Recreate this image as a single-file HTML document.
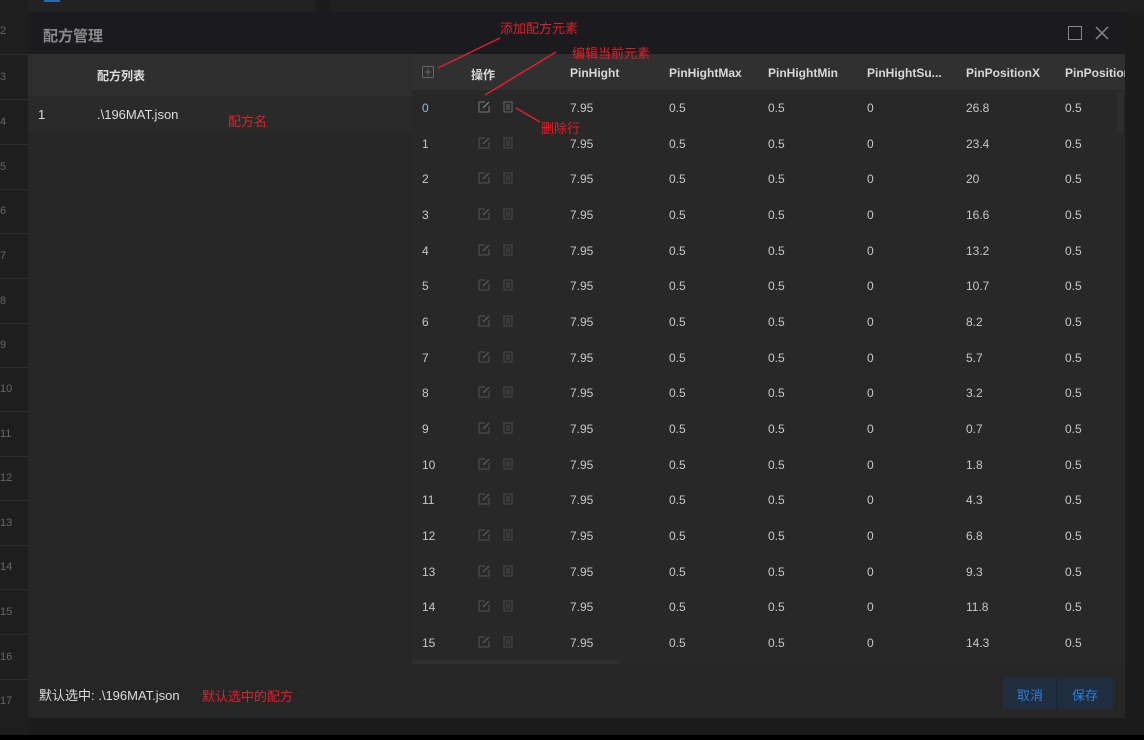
<!DOCTYPE html>
<html><head><meta charset="utf-8"><style>
*{margin:0;padding:0;box-sizing:border-box}
body{width:1144px;height:740px;background:#1c1c1c;position:relative;overflow:hidden;font-family:"Liberation Sans","Noto Sans CJK SC",sans-serif;color:#ccc;font-size:12px}
.a{position:absolute}
.ln{position:absolute;left:0;width:28px;height:1px;background:#2c2c2c}
.rn{position:absolute;left:0;font-size:11px;color:#666}
.dlg{left:28px;top:12px;width:1097px;height:706px;background:#262626}
.row{position:absolute;left:412px;width:713px;height:36px;overflow:hidden}
.row span{position:absolute;top:11px;font-size:12px;color:#c8c8c8;white-space:nowrap}
.hd span{position:absolute;top:12px;font-weight:bold;color:#d8d8d8;font-size:12px}
.red{color:#e0202a;position:absolute;font-size:13px}
</style></head><body>
<div class="a" style="left:0;top:0;width:315px;height:12px;background:#222"></div>
<div class="a" style="left:44px;top:0;width:16px;height:2px;background:#2b6aa8"></div>
<div class="a" style="left:330px;top:0;width:814px;height:12px;background:#202020"></div>
<div class="a" style="left:0;top:0;width:28px;height:740px;background:#1e1e1e"></div>
<span class="rn" style="top:25px">2</span><div class="ln" style="top:54px"></div>
<span class="rn" style="top:71px">3</span><div class="ln" style="top:99px"></div>
<span class="rn" style="top:116px">4</span><div class="ln" style="top:144px"></div>
<span class="rn" style="top:161px">5</span><div class="ln" style="top:189px"></div>
<span class="rn" style="top:205px">6</span><div class="ln" style="top:233px"></div>
<span class="rn" style="top:250px">7</span><div class="ln" style="top:278px"></div>
<span class="rn" style="top:295px">8</span><div class="ln" style="top:323px"></div>
<span class="rn" style="top:339px">9</span><div class="ln" style="top:367px"></div>
<span class="rn" style="top:383px">10</span><div class="ln" style="top:411px"></div>
<span class="rn" style="top:428px">11</span><div class="ln" style="top:456px"></div>
<span class="rn" style="top:472px">12</span><div class="ln" style="top:500px"></div>
<span class="rn" style="top:517px">13</span><div class="ln" style="top:545px"></div>
<span class="rn" style="top:561px">14</span><div class="ln" style="top:589px"></div>
<span class="rn" style="top:606px">15</span><div class="ln" style="top:634px"></div>
<span class="rn" style="top:651px">16</span><div class="ln" style="top:679px"></div>
<span class="rn" style="top:695px">17</span>
<div class="a" style="left:0;top:735px;width:1144px;height:5px;background:#000"></div>

<div class="a dlg"></div>
<div class="a" style="left:28px;top:12px;width:1097px;height:42px;background:#1b1b1f"></div>
<span class="a" style="left:43px;top:25px;font-size:15px;color:#8a8a8a;font-weight:bold">配方管理</span>
<div class="a" style="left:1068px;top:26px;width:14px;height:14px;border:1.5px solid #888"></div>
<svg class="a" style="left:1095px;top:26px" width="14" height="14"><path d="M1 1L13 13M13 1L1 13" stroke="#888" stroke-width="1.5"/></svg>

<div class="a" style="left:28px;top:54px;width:384px;height:42px;background:#2e2e2e"></div>
<span class="a" style="left:97px;top:67px;font-weight:bold;color:#ddd;font-size:12px">配方列表</span>
<div class="a" style="left:28px;top:96px;width:384px;height:37px;background:#2a2a2a"></div>
<span class="a" style="left:38px;top:107px;color:#ddd;font-size:13px">1</span>
<span class="a" style="left:97px;top:107px;color:#ddd;font-size:13px">.\196MAT.json</span>

<div class="a" style="left:412px;top:54px;width:713px;height:611px;background:#282828"></div>
<div class="row hd" style="top:54px;background:#303030">
<svg class="a" style="left:10px;top:12px" width="12" height="12"><rect x="0.5" y="0.5" width="11" height="11" fill="none" stroke="#666"/><path d="M3 6H9M6 3V9" stroke="#666"/></svg>
<span style="left:59px">操作</span><span style="left:158px">PinHight</span><span style="left:257px">PinHightMax</span><span style="left:356px">PinHightMin</span><span style="left:455px">PinHightSu...</span><span style="left:554px">PinPositionX</span><span style="left:653px">PinPositionY</span>
</div>
<div class="a" style="left:1117px;top:92px;width:6px;height:40px;background:#2e2e2e"></div>
<div class="a" style="left:412px;top:660px;width:208px;height:4px;background:#2f2f2f"></div>

<div class="row" style="top:90px"><span style="left:10px;color:#8fb8e8">0</span><svg class="a" style="left:66px;top:11px" width="12" height="12"><path d="M1 1H7M1 1V11H11V5" fill="none" stroke="#777"/><path d="M5 7L11 1" stroke="#777" stroke-width="1.5"/></svg><svg class="a" style="left:91px;top:10px" width="10" height="13"><rect x="1" y="2" width="8" height="10" fill="none" stroke="#666"/><path d="M0 2H10M4 4V10M6 4V10" stroke="#666"/></svg><span style="left:158px">7.95</span><span style="left:257px">0.5</span><span style="left:356px">0.5</span><span style="left:455px">0</span><span style="left:554px">26.8</span><span style="left:653px">0.5</span></div>
<div class="row" style="top:125.7px"><span style="left:10px">1</span><svg class="a" style="left:66px;top:11px" width="12" height="12"><path d="M1 1H7M1 1V11H11V5" fill="none" stroke="#555"/><path d="M5 7L11 1" stroke="#555" stroke-width="1.5"/></svg><svg class="a" style="left:91px;top:10px" width="10" height="13"><rect x="1" y="2" width="8" height="10" fill="none" stroke="#4a4a4a"/><path d="M0 2H10M4 4V10M6 4V10" stroke="#4a4a4a"/></svg><span style="left:158px">7.95</span><span style="left:257px">0.5</span><span style="left:356px">0.5</span><span style="left:455px">0</span><span style="left:554px">23.4</span><span style="left:653px">0.5</span></div>
<div class="row" style="top:161.3px"><span style="left:10px">2</span><svg class="a" style="left:66px;top:11px" width="12" height="12"><path d="M1 1H7M1 1V11H11V5" fill="none" stroke="#555"/><path d="M5 7L11 1" stroke="#555" stroke-width="1.5"/></svg><svg class="a" style="left:91px;top:10px" width="10" height="13"><rect x="1" y="2" width="8" height="10" fill="none" stroke="#4a4a4a"/><path d="M0 2H10M4 4V10M6 4V10" stroke="#4a4a4a"/></svg><span style="left:158px">7.95</span><span style="left:257px">0.5</span><span style="left:356px">0.5</span><span style="left:455px">0</span><span style="left:554px">20</span><span style="left:653px">0.5</span></div>
<div class="row" style="top:197px"><span style="left:10px">3</span><svg class="a" style="left:66px;top:11px" width="12" height="12"><path d="M1 1H7M1 1V11H11V5" fill="none" stroke="#555"/><path d="M5 7L11 1" stroke="#555" stroke-width="1.5"/></svg><svg class="a" style="left:91px;top:10px" width="10" height="13"><rect x="1" y="2" width="8" height="10" fill="none" stroke="#4a4a4a"/><path d="M0 2H10M4 4V10M6 4V10" stroke="#4a4a4a"/></svg><span style="left:158px">7.95</span><span style="left:257px">0.5</span><span style="left:356px">0.5</span><span style="left:455px">0</span><span style="left:554px">16.6</span><span style="left:653px">0.5</span></div>
<div class="row" style="top:232.7px"><span style="left:10px">4</span><svg class="a" style="left:66px;top:11px" width="12" height="12"><path d="M1 1H7M1 1V11H11V5" fill="none" stroke="#555"/><path d="M5 7L11 1" stroke="#555" stroke-width="1.5"/></svg><svg class="a" style="left:91px;top:10px" width="10" height="13"><rect x="1" y="2" width="8" height="10" fill="none" stroke="#4a4a4a"/><path d="M0 2H10M4 4V10M6 4V10" stroke="#4a4a4a"/></svg><span style="left:158px">7.95</span><span style="left:257px">0.5</span><span style="left:356px">0.5</span><span style="left:455px">0</span><span style="left:554px">13.2</span><span style="left:653px">0.5</span></div>
<div class="row" style="top:268.3px"><span style="left:10px">5</span><svg class="a" style="left:66px;top:11px" width="12" height="12"><path d="M1 1H7M1 1V11H11V5" fill="none" stroke="#555"/><path d="M5 7L11 1" stroke="#555" stroke-width="1.5"/></svg><svg class="a" style="left:91px;top:10px" width="10" height="13"><rect x="1" y="2" width="8" height="10" fill="none" stroke="#4a4a4a"/><path d="M0 2H10M4 4V10M6 4V10" stroke="#4a4a4a"/></svg><span style="left:158px">7.95</span><span style="left:257px">0.5</span><span style="left:356px">0.5</span><span style="left:455px">0</span><span style="left:554px">10.7</span><span style="left:653px">0.5</span></div>
<div class="row" style="top:304px"><span style="left:10px">6</span><svg class="a" style="left:66px;top:11px" width="12" height="12"><path d="M1 1H7M1 1V11H11V5" fill="none" stroke="#555"/><path d="M5 7L11 1" stroke="#555" stroke-width="1.5"/></svg><svg class="a" style="left:91px;top:10px" width="10" height="13"><rect x="1" y="2" width="8" height="10" fill="none" stroke="#4a4a4a"/><path d="M0 2H10M4 4V10M6 4V10" stroke="#4a4a4a"/></svg><span style="left:158px">7.95</span><span style="left:257px">0.5</span><span style="left:356px">0.5</span><span style="left:455px">0</span><span style="left:554px">8.2</span><span style="left:653px">0.5</span></div>
<div class="row" style="top:339.7px"><span style="left:10px">7</span><svg class="a" style="left:66px;top:11px" width="12" height="12"><path d="M1 1H7M1 1V11H11V5" fill="none" stroke="#555"/><path d="M5 7L11 1" stroke="#555" stroke-width="1.5"/></svg><svg class="a" style="left:91px;top:10px" width="10" height="13"><rect x="1" y="2" width="8" height="10" fill="none" stroke="#4a4a4a"/><path d="M0 2H10M4 4V10M6 4V10" stroke="#4a4a4a"/></svg><span style="left:158px">7.95</span><span style="left:257px">0.5</span><span style="left:356px">0.5</span><span style="left:455px">0</span><span style="left:554px">5.7</span><span style="left:653px">0.5</span></div>
<div class="row" style="top:375.3px"><span style="left:10px">8</span><svg class="a" style="left:66px;top:11px" width="12" height="12"><path d="M1 1H7M1 1V11H11V5" fill="none" stroke="#555"/><path d="M5 7L11 1" stroke="#555" stroke-width="1.5"/></svg><svg class="a" style="left:91px;top:10px" width="10" height="13"><rect x="1" y="2" width="8" height="10" fill="none" stroke="#4a4a4a"/><path d="M0 2H10M4 4V10M6 4V10" stroke="#4a4a4a"/></svg><span style="left:158px">7.95</span><span style="left:257px">0.5</span><span style="left:356px">0.5</span><span style="left:455px">0</span><span style="left:554px">3.2</span><span style="left:653px">0.5</span></div>
<div class="row" style="top:411px"><span style="left:10px">9</span><svg class="a" style="left:66px;top:11px" width="12" height="12"><path d="M1 1H7M1 1V11H11V5" fill="none" stroke="#555"/><path d="M5 7L11 1" stroke="#555" stroke-width="1.5"/></svg><svg class="a" style="left:91px;top:10px" width="10" height="13"><rect x="1" y="2" width="8" height="10" fill="none" stroke="#4a4a4a"/><path d="M0 2H10M4 4V10M6 4V10" stroke="#4a4a4a"/></svg><span style="left:158px">7.95</span><span style="left:257px">0.5</span><span style="left:356px">0.5</span><span style="left:455px">0</span><span style="left:554px">0.7</span><span style="left:653px">0.5</span></div>
<div class="row" style="top:446.7px"><span style="left:10px">10</span><svg class="a" style="left:66px;top:11px" width="12" height="12"><path d="M1 1H7M1 1V11H11V5" fill="none" stroke="#555"/><path d="M5 7L11 1" stroke="#555" stroke-width="1.5"/></svg><svg class="a" style="left:91px;top:10px" width="10" height="13"><rect x="1" y="2" width="8" height="10" fill="none" stroke="#4a4a4a"/><path d="M0 2H10M4 4V10M6 4V10" stroke="#4a4a4a"/></svg><span style="left:158px">7.95</span><span style="left:257px">0.5</span><span style="left:356px">0.5</span><span style="left:455px">0</span><span style="left:554px">1.8</span><span style="left:653px">0.5</span></div>
<div class="row" style="top:482.3px"><span style="left:10px">11</span><svg class="a" style="left:66px;top:11px" width="12" height="12"><path d="M1 1H7M1 1V11H11V5" fill="none" stroke="#555"/><path d="M5 7L11 1" stroke="#555" stroke-width="1.5"/></svg><svg class="a" style="left:91px;top:10px" width="10" height="13"><rect x="1" y="2" width="8" height="10" fill="none" stroke="#4a4a4a"/><path d="M0 2H10M4 4V10M6 4V10" stroke="#4a4a4a"/></svg><span style="left:158px">7.95</span><span style="left:257px">0.5</span><span style="left:356px">0.5</span><span style="left:455px">0</span><span style="left:554px">4.3</span><span style="left:653px">0.5</span></div>
<div class="row" style="top:518px"><span style="left:10px">12</span><svg class="a" style="left:66px;top:11px" width="12" height="12"><path d="M1 1H7M1 1V11H11V5" fill="none" stroke="#555"/><path d="M5 7L11 1" stroke="#555" stroke-width="1.5"/></svg><svg class="a" style="left:91px;top:10px" width="10" height="13"><rect x="1" y="2" width="8" height="10" fill="none" stroke="#4a4a4a"/><path d="M0 2H10M4 4V10M6 4V10" stroke="#4a4a4a"/></svg><span style="left:158px">7.95</span><span style="left:257px">0.5</span><span style="left:356px">0.5</span><span style="left:455px">0</span><span style="left:554px">6.8</span><span style="left:653px">0.5</span></div>
<div class="row" style="top:553.7px"><span style="left:10px">13</span><svg class="a" style="left:66px;top:11px" width="12" height="12"><path d="M1 1H7M1 1V11H11V5" fill="none" stroke="#555"/><path d="M5 7L11 1" stroke="#555" stroke-width="1.5"/></svg><svg class="a" style="left:91px;top:10px" width="10" height="13"><rect x="1" y="2" width="8" height="10" fill="none" stroke="#4a4a4a"/><path d="M0 2H10M4 4V10M6 4V10" stroke="#4a4a4a"/></svg><span style="left:158px">7.95</span><span style="left:257px">0.5</span><span style="left:356px">0.5</span><span style="left:455px">0</span><span style="left:554px">9.3</span><span style="left:653px">0.5</span></div>
<div class="row" style="top:589.3px"><span style="left:10px">14</span><svg class="a" style="left:66px;top:11px" width="12" height="12"><path d="M1 1H7M1 1V11H11V5" fill="none" stroke="#555"/><path d="M5 7L11 1" stroke="#555" stroke-width="1.5"/></svg><svg class="a" style="left:91px;top:10px" width="10" height="13"><rect x="1" y="2" width="8" height="10" fill="none" stroke="#4a4a4a"/><path d="M0 2H10M4 4V10M6 4V10" stroke="#4a4a4a"/></svg><span style="left:158px">7.95</span><span style="left:257px">0.5</span><span style="left:356px">0.5</span><span style="left:455px">0</span><span style="left:554px">11.8</span><span style="left:653px">0.5</span></div>
<div class="row" style="top:625px"><span style="left:10px">15</span><svg class="a" style="left:66px;top:11px" width="12" height="12"><path d="M1 1H7M1 1V11H11V5" fill="none" stroke="#555"/><path d="M5 7L11 1" stroke="#555" stroke-width="1.5"/></svg><svg class="a" style="left:91px;top:10px" width="10" height="13"><rect x="1" y="2" width="8" height="10" fill="none" stroke="#4a4a4a"/><path d="M0 2H10M4 4V10M6 4V10" stroke="#4a4a4a"/></svg><span style="left:158px">7.95</span><span style="left:257px">0.5</span><span style="left:356px">0.5</span><span style="left:455px">0</span><span style="left:554px">14.3</span><span style="left:653px">0.5</span></div>

<span class="a" style="left:39px;top:685px;font-size:13px;color:#ddd">默认选中: .\196MAT.json</span>
<div class="a" style="left:1003px;top:677px;width:110px;height:32px;background:#1f2d3e"></div>
<div class="a" style="left:1056px;top:677px;width:1px;height:32px;background:#1a2533"></div>
<span class="a" style="left:1017px;top:685px;font-size:13px;color:#2f80dd">取消</span>
<span class="a" style="left:1072px;top:685px;font-size:13px;color:#2f80dd">保存</span>

<svg class="a" style="left:0;top:0" width="1144" height="740"><g stroke="#e0202a" stroke-width="1.5"><path d="M438 68L500 38"/><path d="M485 95L556 52"/><path d="M516 108L540 122"/></g></svg>
<span class="red" style="left:500px;top:18px">添加配方元素</span>
<span class="red" style="left:572px;top:43px">编辑当前元素</span>
<span class="red" style="left:541px;top:118px">删除行</span>
<span class="red" style="left:228px;top:111px">配方名</span>
<span class="red" style="left:202px;top:686px">默认选中的配方</span>
</body></html>
